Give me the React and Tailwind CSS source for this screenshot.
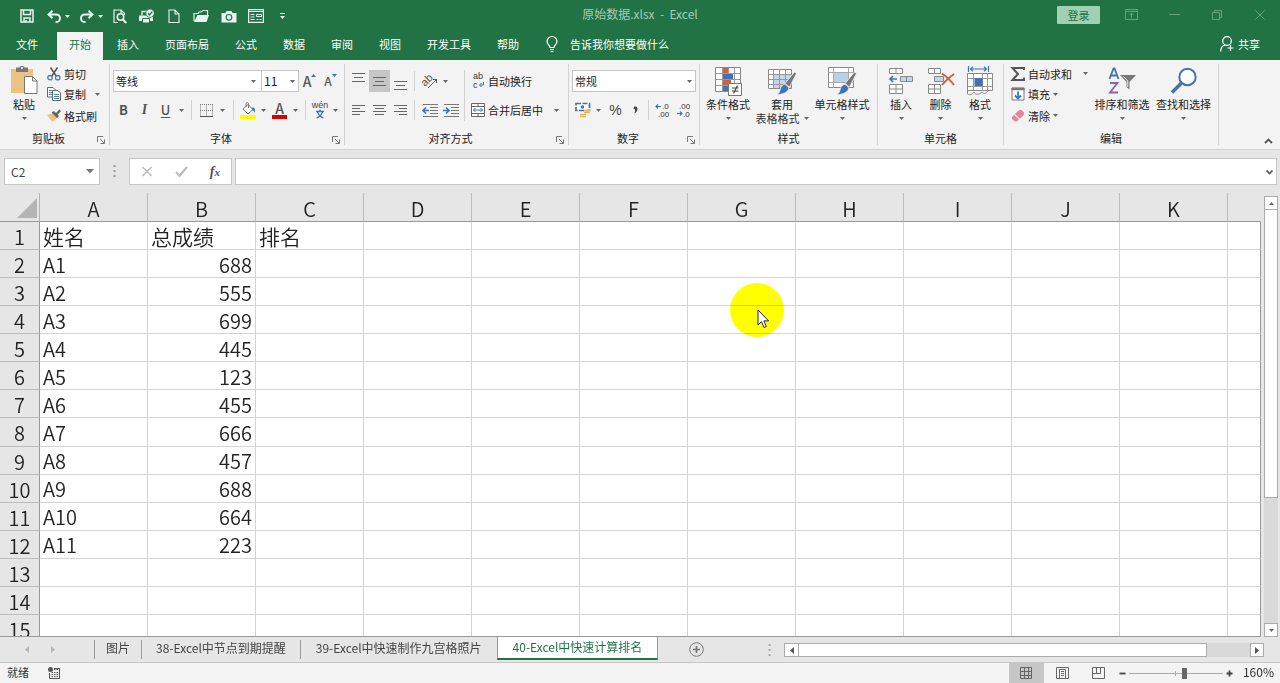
import React from "react";

const tabs = ["插入", "页面布局", "公式", "数据", "审阅", "视图", "开发工具", "帮助"];
const columns = ["A", "B", "C", "D", "E", "F", "G", "H", "I", "J", "K"];
const records = [
  ["姓名", "总成绩", "排名"],
  ["A1", "688"],
  ["A2", "555"],
  ["A3", "699"],
  ["A4", "445"],
  ["A5", "123"],
  ["A6", "455"],
  ["A7", "666"],
  ["A8", "457"],
  ["A9", "688"],
  ["A10", "664"],
  ["A11", "223"],
  [],
  [],
  [],
];

function Icon({ w = 16, h = 16, children, className = "" }) {
  return (
    <svg
      width={w}
      height={h}
      viewBox={`0 0 ${w} ${h}`}
      fill="none"
      stroke="currentColor"
      aria-hidden="true"
      className={`shrink-0 overflow-visible font-['Liberation_Sans','Noto_Sans_CJK_SC',sans-serif] ${className}`}
    >
      {children}
    </svg>
  );
}

function Arrow({ className = "" }) {
  return (
    <Icon w={5} h={3} className={className}>
      <path d="M0 0h5L2.5 3z" fill="currentColor" stroke="none" />
    </Icon>
  );
}

function DropButton({ label, className = "w-[11px]" }) {
  return (
    <button aria-label={label} className={`flex h-5 shrink-0 items-center justify-center text-[#666] ${className}`}>
      <Arrow />
    </button>
  );
}

function Tool({ label, className = "w-[21px]", children }) {
  return (
    <button aria-label={label} className={`flex h-[22px] shrink-0 items-center justify-center ${className}`}>
      {children}
    </button>
  );
}

function Divider({ className = "h-5" }) {
  return <span className={`w-px shrink-0 bg-[#d2d2d2] ${className}`} />;
}

function Group({ title, launcher, className, children }) {
  return (
    <section
      aria-label={title}
      className={`my-[4px] flex shrink-0 flex-col border-r border-[#d2d2d2] ${className}`}
    >
      <div className="flex flex-1">{children}</div>
      <div className="flex h-[14px] items-center">
        <span className="flex-1 text-center">{title}</span>
        {launcher ? (
          <button aria-label={`${title}设置`} className="mt-1 mr-[4px] text-[#777]">
            <Icon w={8} h={8}>
              <path d="M.5 6V.5H6M3 3l4 4M7.5 3.5v4h-4" />
            </Icon>
          </button>
        ) : null}
      </div>
    </section>
  );
}

function BigButton({ icon, lines, className }) {
  return (
    <button className={`flex shrink-0 flex-col items-center self-start leading-[14px] ${className}`}>
      <span className="flex h-[33px] items-center">{icon}</span>
      <span className="whitespace-nowrap">{lines[0]}</span>
      <span className="flex h-[14px] items-center gap-[4px] whitespace-nowrap text-[#666]">
        {lines[1] ? <span className="text-[#333]">{lines[1]}</span> : null}
        <Arrow />
      </span>
    </button>
  );
}

function AlignIcon({ rows }) {
  return (
    <Icon w={13} h={rows.length * 3} className="text-[#666]">
      {rows.map(([a, b], i) => (
        <path key={i} d={`M${a} ${i * 3 + 1.5}H${b}`} />
      ))}
    </Icon>
  );
}

function ThreeLines() {
  return (
    <Icon w={13} h={9} className="text-[#666]">
      <path d="M0 .5h13M2 4.500h9M0 8.500h13" />
    </Icon>
  );
}

const SaveIcon = () => (
  <Icon w={14} h={14}>
    <path d="M1 1h12v12H1zM3.5 1v4.500h7V1M4 13V9h6v4M6 13v-2" strokeWidth="1.500" />
  </Icon>
);
const UndoIcon = ({ flip }) => (
  <Icon w={14} h={13} className={flip ? "-scale-x-100" : ""}>
    <path d="M1.500 4.500h7.500c2.500 0 4 1.500 4 3.700 0 2.300-1.700 3.800-4.500 3.800M5.500.8L1.500 4.500l4 3.700" strokeWidth="1.900" />
  </Icon>
);
const PreviewIcon = () => (
  <Icon w={14} h={15}>
    <path d="M5 13.500H1V1h7l3.500 3.500v1.500M8 1v3" strokeWidth="1.200" />
    <circle cx="7.500" cy="8" r="3.200" strokeWidth="1.600" />
    <path d="M9.700 10.300l3.500 3.700" strokeWidth="2.200" />
  </Icon>
);
const PrintIcon = () => (
  <Icon w={16} h={15}>
    <path d="M0 6.500h14V12H0z" fill="currentColor" stroke="none" />
    <path d="M3 6.500V2.500h5" strokeWidth="1.300" />
    <path d="M3.500 9.500h7v4.500h-7z" fill="currentColor" stroke="#217346" />
    <circle cx="11" cy="4.200" r="4.200" fill="#e9f3ed" stroke="#217346" strokeWidth=".8" />
    <path d="M9 4.200l1.500 1.700 2.700-3.300" stroke="#217346" strokeWidth="1.300" />
  </Icon>
);
const PageIcon = () => (
  <Icon w={12} h={14}>
    <path d="M1 1h6l4 4v8.500H1zM7 1v4h4" strokeWidth="1.100" />
  </Icon>
);
const FolderIcon = () => (
  <Icon w={16} h={14}>
    <path d="M1 12V4.500h4l1-1.500h2l2-1.500h4.500V6" strokeWidth="1.200" />
    <path d="M1 13l3.500-7H16l-2.500 7z" fill="currentColor" stroke="none" />
  </Icon>
);
const CameraIcon = () => (
  <Icon w={16} h={13}>
    <path d="M.5 3h4l1-2h5l1 2h4v9.500H.5z" fill="currentColor" stroke="none" />
    <circle cx="8" cy="7.300" r="2.800" stroke="#217346" strokeWidth="1.200" />
  </Icon>
);
const FormIcon = () => (
  <Icon w={16} h={14}>
    <path d="M.6.6h14.800v12.800H.6zM.6 2.500h14.800" strokeWidth="1.200" />
    <path d="M2.500 5.500h4M2.500 8h4M2.500 10.500h4M8.500 5.500h5v2h-5zM8.500 10.500h2M11.500 10.500h2" />
  </Icon>
);

const PasteIcon = () => (
  <Icon w={28} h={31}>
    <path d="M1 4h22v24H1z" fill="#eac282" stroke="none" />
    <path d="M6 2.500h3.500C9.500.5 14.500.5 14.500 2.500H18V7H6z" fill="#777" stroke="none" />
    <circle cx="12" cy="3" r="1" fill="#fff" stroke="none" />
    <path d="M14.500 11.500h8l4.500 4.500v12.500H14.500z" fill="#fff" stroke="#777" />
    <path d="M22.500 11.500V16H27" stroke="#777" />
  </Icon>
);
const CutIcon = () => (
  <Icon w={14} h={14}>
    <path d="M3.500.5l6 9M10.500.5l-6 9" stroke="#555" strokeWidth="1.500" />
    <circle cx="3" cy="10.700" r="2.200" stroke="#4a7ebb" strokeWidth="1.300" />
    <circle cx="10.700" cy="10.700" r="2.200" stroke="#4a7ebb" strokeWidth="1.300" />
  </Icon>
);
const CopyIcon = () => (
  <Icon w={14} h={14}>
    <path d="M.5.500h5.500l2 2v7.500H.5z" fill="#fff" stroke="#666" />
    <path d="M2 3.500h3M2 5.500h3M2 7.500h3" stroke="#4a7ebb" />
    <path d="M5.500 3.500h5.500l2.500 2.500v7.500h-8z" fill="#fff" stroke="#666" />
    <path d="M7 7.500h5M7 9.500h5M7 11.500h5" stroke="#4a7ebb" />
  </Icon>
);
const BrushIcon = () => (
  <Icon w={14} h={14}>
    <path d="M0 6l5.500-1.500 4.500 4.500L5.500 13z" fill="#eac282" stroke="none" />
    <path d="M4.500 3.500l2.500-1.500 2 2L12.300.5 14 2.200 10.700 5.500l1.300 1.500-2 2.200z" fill="#666" stroke="none" />
  </Icon>
);

const CondIcon = () => (
  <Icon w={28} h={30}>
    <path d="M1.500 1.500h25v24h-25z" fill="#fff" stroke="#888" />
    <path d="M1.500 7.500h25M1.500 13.500h25M1.500 19.500h25M8.500 1.500v24M14.500 1.500v24M20.500 1.500v24" stroke="#999" />
    <path d="M9 2h5v5H9zM9 14h8v5H9z" fill="#d1603d" stroke="none" />
    <path d="M9 8h10v5H9zM9 20h5v5H9z" fill="#3f73b3" stroke="none" />
    <path d="M14.500 17.500h13v12h-13z" fill="#fff" stroke="#777" />
    <path d="M18 22h6.500M18 25h6.500M23.500 19.500l-4 8" stroke="#444" strokeWidth="1.200" />
  </Icon>
);
const brush = (
  <>
    <path d="M27.500 6l2 1.500-7 13.500-4.500-3.500z" fill="#777" stroke="#f3f3f3" strokeWidth=".8" />
    <path d="M17.500 18.500c2.500.5 4 2 4 4.500-1.500 4-7 5.500-11.500 5.500 2.500-1.500 2.500-3 3.500-5.500.5-2.500 2-4 4-4.500z" fill="#3f73b3" stroke="#f3f3f3" strokeWidth=".6" />
  </>
);
const TableFormatIcon = () => (
  <Icon w={30} h={30}>
    <path d="M1.500 3.500h23v19h-23z" fill="#fff" stroke="#888" />
    <path d="M7 8h17v14H7z" fill="#c3d6ea" stroke="none" />
    <path d="M1.500 8.500h23M1.500 13.500h23M1.500 18.500h23M6.500 3.500v19M12.500 3.500v19M18.500 3.500v19" stroke="#999" />
    {brush}
  </Icon>
);
const CellStyleIcon = () => (
  <Icon w={30} h={30}>
    <path d="M1.500 1.500h25v20h-25z" fill="#fff" stroke="#888" />
    <path d="M1.500 6.500h25M1.500 16.500h25M6.500 1.500v20M21.500 1.500v20" stroke="#aaa" />
    <path d="M7 7h14v9H7z" fill="#b8d0e8" stroke="none" />
    {brush}
  </Icon>
);
const InsertIcon = () => (
  <Icon w={26} h={28}>
    <path d="M1.500 1.500h13v5h-13zM8 1.500v5M1.500 17.500h13v9h-13zM8 17.500v9M1.500 22h13" fill="#fff" stroke="#888" />
    <path d="M12.500 9.500h12v5h-12zM18.500 9.500v5" fill="#c3d6ea" stroke="#888" />
    <path d="M9 12H2M5 9l-3 3 3 3" stroke="#3f73b3" strokeWidth="1.700" />
  </Icon>
);
const DeleteIcon = () => (
  <Icon w={28} h={28}>
    <path d="M1.500 1.500h12v5h-12zM7.500 1.500v5M1.500 17.500h12v9h-12zM7.500 17.500v9M1.500 22h12" fill="#fff" stroke="#888" />
    <path d="M7.500 9.500h9v5h-9z" fill="#c3d6ea" stroke="#888" />
    <path d="M15 6.500c4 2.500 8 6.500 12 11.500M27 7c-4 2.500-8 6-12 11" stroke="#d1603d" strokeWidth="2" />
  </Icon>
);
const FormatIcon = () => (
  <Icon w={28} h={30}>
    <path d="M2.500 0v6M22.500 0v6M4.500 3h16M7 .8L4.500 3 7 5.200M18 .8L20.500 3 18 5.200" stroke="#3f73b3" strokeWidth="1.200" />
    <path d="M1.500 7.500h25v17h-25z" fill="#fff" stroke="#888" />
    <path d="M1.500 12.500h25M1.500 20.500h25M7.500 7.500v17M16.500 7.500v17M21.500 7.500v17" stroke="#999" />
    <path d="M8.500 12h8v8h-8z" fill="#3f73b3" stroke="none" />
    <path d="M1.500 24.500v3.500c3 1.500 4.500.5 6.500-2 1 3 5 3 8 0 1.500 2 4 2 6-1" stroke="#888" />
  </Icon>
);
const SortIcon = () => (
  <Icon w={28} h={28}>
    <path d="M1.500 12L5.500 1.500h1L10.500 12M3 8.500h6" stroke="#3f73b3" strokeWidth="1.800" />
    <path d="M2 16h7.500L2 25.500h8" stroke="#8f5fb5" strokeWidth="1.800" />
    <path d="M12 8h16l-6.500 7v7.500L18.500 20v-5z" fill="#777" stroke="none" />
    <path d="M15.500 9.500l4.300 4.500v6" stroke="#eee" />
  </Icon>
);
const FindIcon = () => (
  <Icon w={28} h={28}>
    <circle cx="17.500" cy="10" r="8.200" fill="#fff" stroke="#3f73b3" strokeWidth="2" />
    <path d="M11.500 16L2 25.500" stroke="#3f73b3" strokeWidth="3.500" />
  </Icon>
);

function Ribbon() {
  return (
    <div className="flex h-[90px] shrink-0 border-b border-[#d2d2d2] bg-[#f3f3f3] text-[11px] leading-[14px] text-[#222]">
      <Group title="剪贴板" launcher className="w-[110px]">
        <BigButton icon={<PasteIcon />} lines={["粘贴"]} className="ml-[5px] w-[38px]" />
        <div className="ml-[4px] flex flex-col">
          <button className="flex h-[19px] items-center gap-[3px]"><CutIcon />剪切</button>
          <div className="flex h-[22px] items-center">
            <button className="flex items-center gap-[3px]"><CopyIcon />复制</button>
            <DropButton label="复制选项" className="ml-[6px] w-[11px]" />
          </div>
          <button className="flex h-[21px] items-center gap-[3px]"><BrushIcon />格式刷</button>
        </div>
      </Group>

      <Group title="字体" launcher className="w-[235px]">
        <div className="flex flex-col gap-[7px] pt-[6px] pl-[3px]">
          <div className="flex h-[22px] items-center">
            <div className="relative flex h-[22px] w-[149px] items-center">
              <select aria-label="字体名称" className="h-full w-full appearance-none border border-[#c6c6c6] bg-white px-[2px]">
                <option>等线</option>
              </select>
              <Arrow className="pointer-events-none absolute right-[6px] text-[#666]" />
            </div>
            <div className="relative -ml-px flex h-[22px] w-[38px] items-center">
              <select aria-label="字号" className="h-full w-full appearance-none border border-[#c6c6c6] bg-white px-[2px] text-[12px]">
                <option>11</option>
              </select>
              <Arrow className="pointer-events-none absolute right-[4px] text-[#666]" />
            </div>
            <Tool label="增大字号">
              <span className="text-[14px] font-medium text-[#555]">A</span>
              <Arrow className="-mt-3 rotate-180 text-[#3f73b3]" />
            </Tool>
            <Tool label="减小字号">
              <span className="text-[12px] font-medium text-[#555]">A</span>
              <Arrow className="-mt-3 text-[#3f73b3]" />
            </Tool>
          </div>
          <div className="flex h-[22px] items-center text-[#555]">
            <Tool label="加粗"><b className="text-[13px]">B</b></Tool>
            <Tool label="倾斜"><i className="font-['Liberation_Serif',serif] text-[14px] font-bold">I</i></Tool>
            <Tool label="下划线"><span className="text-[13px] font-medium underline underline-offset-2">U</span></Tool>
            <DropButton label="下划线选项" />
            <Divider className="mx-[4px] h-5" />
            <Tool label="边框">
              <Icon w={13} h={13}>
                <path d="M.5.500v12M12.500.500v12M6.500.500v12M0 .5h13M0 6.500h13" strokeDasharray="1 1" stroke="#777" />
                <path d="M0 12.500h13" stroke="#555" />
              </Icon>
            </Tool>
            <DropButton label="边框选项" />
            <Divider className="mr-[3px] ml-[5px] h-5" />
            <Tool label="填充颜色">
              <Icon w={16} h={17}>
                <path d="M3 7l5-4.500 5 5L8 12z" fill="#fff" stroke="#777" />
                <path d="M6 5V1.500c1-1.500 2.500-1 2.500.5v4" stroke="#777" />
                <path d="M12 5.500c3 0 3.500 2 2.800 5-1-1-1.500-2.500-2.800-3z" fill="#3f73b3" stroke="none" />
                <path d="M0 13h16v4H0z" fill="#ffff00" stroke="none" />
              </Icon>
            </Tool>
            <DropButton label="填充颜色选项" />
            <Tool label="字体颜色">
              <span className="flex w-[15px] flex-col items-center border-b-4 border-[#d90000] text-[14px] leading-[13px] font-medium">A</span>
            </Tool>
            <DropButton label="字体颜色选项" />
            <Divider className="mr-[3px] ml-[4px] h-5" />
            <Tool label="拼音">
              <Icon w={16} h={17}>
                <text x="8" y="6" textAnchor="middle" fontSize="9" fill="#444" stroke="none">wén</text>
                <path d="M4 9.500h8M8 7.500v2M5.500 10c1 3 3 5 6 6M10.500 10c-1 3-3 5-6 6" stroke="#3f73b3" strokeWidth="1.300" />
              </Icon>
            </Tool>
            <DropButton label="拼音选项" />
          </div>
        </div>
      </Group>

      <Group title="对齐方式" launcher className="w-[224px]">
        <div className="flex w-full items-start pt-[6px] pl-[3px]">
          <div className="flex flex-col gap-[7px]">
            <div className="flex h-[22px] items-center">
              <Tool label="顶端对齐" className="w-[21px] pb-[8px]"><ThreeLines /></Tool>
              <Tool label="垂直居中" className="w-[21px] bg-[#c6c6c6]"><ThreeLines /></Tool>
              <Tool label="底端对齐" className="w-[21px] pt-[8px]"><ThreeLines /></Tool>
              <Divider className="mr-[4px] ml-[3px] h-5" />
              <Tool label="方向">
                <Icon w={16} h={15} className="text-[#555]">
                  <text x="0" y="10" transform="rotate(-45 5 8)" fontSize="11" fill="#555" stroke="none">ab</text>
                  <path d="M6 14l8.500-8.500M11 5.500h3.500V9" />
                </Icon>
              </Tool>
              <DropButton label="方向选项" />
            </div>
            <div className="flex h-[22px] items-center">
              <Tool label="左对齐"><AlignIcon rows={[[0, 13], [0, 8], [0, 13], [0, 8]]} /></Tool>
              <Tool label="居中"><AlignIcon rows={[[0, 13], [2, 11], [0, 13], [2, 11]]} /></Tool>
              <Tool label="右对齐"><AlignIcon rows={[[0, 13], [5, 13], [0, 13], [5, 13]]} /></Tool>
              <Divider className="mr-[4px] ml-[3px] h-5" />
              <Tool label="减少缩进量">
                <Icon w={16} h={13} className="text-[#777]">
                  <path d="M1 .5h15M8 3.500h8M8 6.500h8M8 9.500h8M1 12.500h15" />
                  <path d="M7 6.500H1.500M4 3.500l-3 3 3 3" stroke="#3f73b3" strokeWidth="1.700" />
                </Icon>
              </Tool>
              <Tool label="增加缩进量">
                <Icon w={16} h={13} className="text-[#777]">
                  <path d="M1 .5h15M8 3.500h8M8 6.500h8M8 9.500h8M1 12.500h15" />
                  <path d="M0 6.500h5.500M3 3.500l3 3-3 3" stroke="#3f73b3" strokeWidth="1.700" />
                </Icon>
              </Tool>
            </div>
          </div>
          <Divider className="ml-[3px] h-[51px]" />
          <div className="flex flex-1 flex-col gap-[7px] pl-[6px]">
            <button className="flex h-[22px] items-center gap-[3px]">
              <Icon w={14} h={16} className="text-[#555]">
                <text x="2" y="6" fontSize="9" fill="#333" stroke="none">ab</text>
                <text x="2" y="15" fontSize="9" fill="#333" stroke="none">c</text>
                <path d="M12.500 9v3H8.500M10.500 10l-2 2 2 2" stroke="#3f73b3" />
              </Icon>
              自动换行
            </button>
            <div className="flex h-[22px] items-center">
              <button className="flex items-center gap-[3px]">
                <Icon w={14} h={14} className="text-[#666]">
                  <path d="M.5.500h13v13H.5zM.5 3.500h13M.5 10.500h13M7 .5v3M7 10.500v3" fill="#fff" />
                  <path d="M2.500 7h9M4.500 5l-2 2 2 2M9.500 5l2 2-2 2" stroke="#3f73b3" />
                </Icon>
                合并后居中
              </button>
              <DropButton label="合并选项" className="ml-[8px] w-[11px]" />
            </div>
          </div>
        </div>
      </Group>

      <Group title="数字" launcher className="w-[131px]">
        <div className="flex w-full flex-col gap-[7px] pt-[6px] pr-[3px] pl-[3px]">
          <div className="relative flex h-[22px] items-center">
            <select aria-label="数字格式" className="h-full w-full appearance-none border border-[#c6c6c6] bg-white px-[2px]">
              <option>常规</option>
            </select>
            <Arrow className="pointer-events-none absolute right-[4px] text-[#666]" />
          </div>
          <div className="flex h-[22px] items-center text-[#555]">
            <Tool label="会计数字格式">
              <Icon w={16} h={16}>
                <path d="M1 1.500h13.500v7H1z" fill="#fff" stroke="#3f73b3" strokeWidth="1.700" strokeDasharray="5 1.500" />
                <circle cx="7.500" cy="5" r="1.700" fill="#3f73b3" stroke="none" />
                <path d="M9 8.500h6M9 10.500h6M5 12.500h6M5 14.500h6" stroke="#eab65f" strokeWidth="1.400" />
              </Icon>
            </Tool>
            <DropButton label="货币选项" />
            <Tool label="百分比" className="w-[23px]"><span className="font-['Liberation_Sans',sans-serif] text-[14px] text-[#444]">%</span></Tool>
            <Tool label="千位分隔" className="w-[17px]">
              <Icon w={5} h={8}>
                <path d="M1.200.500h2.300L4.500 2.500C4.500 5 3.500 6.500 1 7.500 2 6 2.300 5 2 3.500L.5 2.500z" fill="#444" stroke="none" />
              </Icon>
            </Tool>
            <Divider className="mr-[3px] ml-[4px] h-5" />
            <Tool label="增加小数位数">
              <Icon w={15} h={14}>
                <path d="M6 3.500H1M3 1.500l-2 2 2 2" stroke="#3f73b3" strokeWidth="1.200" />
                <text x="7" y="6" fontSize="8" fill="#333" stroke="none">.0</text>
                <text x="3" y="14" fontSize="8" fill="#333" stroke="none">.00</text>
              </Icon>
            </Tool>
            <Tool label="减少小数位数">
              <Icon w={15} h={14}>
                <text x="3" y="6" fontSize="8" fill="#333" stroke="none">.00</text>
                <path d="M1 10.500h5M4 8.500l2 2-2 2" stroke="#3f73b3" strokeWidth="1.200" />
                <text x="7" y="14" fontSize="8" fill="#333" stroke="none">.0</text>
              </Icon>
            </Tool>
          </div>
        </div>
      </Group>

      <Group title="样式" className="w-[178px]">
        <div className="flex pl-[2px]">
          <BigButton icon={<CondIcon />} lines={["条件格式"]} className="w-[52px]" />
          <BigButton icon={<TableFormatIcon />} lines={["套用", "表格格式"]} className="w-[56px]" />
          <BigButton icon={<CellStyleIcon />} lines={["单元格样式"]} className="w-[64px]" />
        </div>
      </Group>

      <Group title="单元格" className="w-[126px]">
        <div className="flex pl-[3px]">
          <BigButton icon={<InsertIcon />} lines={["插入"]} className="w-[40px]" />
          <BigButton icon={<DeleteIcon />} lines={["删除"]} className="w-[39px]" />
          <BigButton icon={<FormatIcon />} lines={["格式"]} className="w-[40px]" />
        </div>
      </Group>

      <Group title="编辑" className="w-[215px]">
        <div className="ml-[7px] flex w-[80px] flex-col">
          <div className="flex h-[19px] items-center">
            <button className="flex items-center gap-[3px]">
              <Icon w={14} h={14} className="text-[#555]">
                <path d="M13 3V1H1.500l5.500 6-5.500 6H13v-2.500" strokeWidth="2" />
              </Icon>
              自动求和
            </button>
            <DropButton label="求和选项" className="ml-[8px] w-[11px]" />
          </div>
          <button className="flex h-[22px] items-center gap-[3px]">
            <Icon w={14} h={14}>
              <path d="M1 1h12v12H1z" fill="#fff" stroke="#777" />
              <path d="M.5 2h13" stroke="#777" strokeWidth="2.500" />
              <path d="M7 4.500v7M4 8.500l3 3 3-3" stroke="#3f73b3" strokeWidth="1.800" />
            </Icon>
            填充<Arrow className="text-[#666]" />
          </button>
          <button className="flex h-[21px] items-center gap-[3px]">
            <Icon w={14} h={14}>
              <path d="M1 8l2.200-2.200 4.800 4.700L6 12.500H4L1 10z" fill="#e8839b" stroke="none" />
              <path d="M4 5l4.500-4h2L13 3.500v2L9 9.700z" fill="#e8839b" stroke="none" />
            </Icon>
            清除<Arrow className="text-[#666]" />
          </button>
        </div>
        <BigButton icon={<SortIcon />} lines={["排序和筛选"]} className="w-[62px]" />
        <BigButton icon={<FindIcon />} lines={["查找和选择"]} className="w-[61px]" />
      </Group>

      <div className="flex flex-1 items-end justify-end">
        <button aria-label="折叠功能区" className="mr-[7px] mb-[5px] text-[#555]">
          <Icon w={9} h={6}>
            <path d="M1 5l3.500-3.500L8 5" strokeWidth="1.800" />
          </Icon>
        </button>
      </div>
    </div>
  );
}

function TitleBar() {
  return (
    <header className="shrink-0 bg-[#217346] text-[#e9f3ed]">
      <div className="grid h-[32px] grid-cols-[1fr_auto_1fr] items-center">
        <div className="flex items-center">
          <button aria-label="保存" className="ml-[14px] flex w-[26px] justify-center"><SaveIcon /></button>
          <button aria-label="撤消" className="ml-[7px] flex items-center gap-[4px]"><UndoIcon /><Arrow /></button>
          <button aria-label="恢复" className="ml-[10px] flex items-center gap-[4px]"><UndoIcon flip /><Arrow /></button>
          <div className="ml-[3px] flex">
            <button aria-label="打印预览" className="flex w-[27px] justify-center"><PreviewIcon /></button>
            <button aria-label="快速打印" className="flex w-[27px] justify-center"><PrintIcon /></button>
            <button aria-label="新建" className="flex w-[27px] justify-center"><PageIcon /></button>
            <button aria-label="打开" className="flex w-[28px] justify-center"><FolderIcon /></button>
            <button aria-label="照相机" className="flex w-[27px] items-center justify-center"><CameraIcon /></button>
            <button aria-label="记录单" className="flex w-[27px] justify-center"><FormIcon /></button>
            <button aria-label="自定义快速访问工具栏" className="flex w-[27px] items-center justify-center">
              <Icon w={5} h={7}>
                <path d="M0 .5h5" />
                <path d="M0 3h5L2.500 6z" fill="currentColor" stroke="none" />
              </Icon>
            </button>
          </div>
        </div>
        <h1 className="pb-[4px] text-[12px] whitespace-pre text-[#a5cbb4]">原始数据.xlsx  -  Excel</h1>
        <div className="flex items-center justify-end pb-[3px] text-[#65a27f]">
          <button className="mr-[25px] h-[18px] w-[43px] rounded-[1px] bg-[#9fd0b3] text-[11px] leading-[16px] text-[#217346]">登录</button>
          <button aria-label="功能区显示选项" className="flex w-[13px]">
            <Icon w={13} h={11}>
              <path d="M.5.500h12v10H.5zM.5 2.500h12M6.500 9V4.500M4.500 6l2-2 2 2" />
            </Icon>
          </button>
          <button aria-label="最小化" className="ml-[31px] flex w-[11px]">
            <Icon w={11} h={11}><path d="M0 5.500h11" /></Icon>
          </button>
          <button aria-label="还原" className="ml-[32px] flex w-[10px]">
            <Icon w={10} h={10}><path d="M.5 2.500h7v7h-7zM2.500 2.500v-2h7v7h-2" /></Icon>
          </button>
          <button aria-label="关闭" className="mr-[15px] ml-[33px] flex w-[10px]">
            <Icon w={10} h={10}><path d="M.5.500l9 9M9.500.500l-9 9" /></Icon>
          </button>
        </div>
      </div>
      <nav aria-label="功能区选项卡" className="flex h-[28px] items-center text-[11px] leading-[22px] text-white">
        <button className="ml-[4px] px-[12px] pb-[4px]">文件</button>
        <button aria-current="page" className="ml-[7px] h-full bg-[#f3f3f3] px-[12px] pb-[4px] text-[#217346]">开始</button>
        <div className="ml-[2px] flex gap-[2px] pb-[4px]">
          {tabs.map((t) => (
            <button key={t} className="px-[12px]">{t}</button>
          ))}
        </div>
        <button className="ml-[15px] flex items-center gap-[12px] pb-[4px]">
          <Icon w={12} h={16}>
            <path d="M4 11.500C4 9 1 8.500 1 5.500a5 5 0 0110 0c0 3-3 3.500-3 6zM4 13.500h4M4.500 15.500h3" strokeWidth="1.200" />
          </Icon>
          告诉我你想要做什么
        </button>
        <button className="mr-[20px] ml-auto flex items-center gap-[4px] pb-[4px]">
          <Icon w={14} h={16}>
            <circle cx="7" cy="5" r="4.300" strokeWidth="1.200" />
            <path d="M.7 15.500c0-3.500 2-6 4.500-6.500M10.500 9v6M7.500 12h6" strokeWidth="1.200" />
          </Icon>
          共享
        </button>
      </nav>
    </header>
  );
}

function FormulaBar() {
  return (
    <div className="flex h-[43px] shrink-0 items-center bg-[#e6e6e6] pr-[3px] pl-[4px]">
      <div className="flex h-[27px] w-[96px] items-center border border-[#c8c8c8] bg-white">
        <input aria-label="名称框" defaultValue="C2" className="h-full w-0 flex-1 px-[6px] text-[12px] text-[#444] outline-none" />
        <button aria-label="名称列表" className="px-[5px] text-[#777]">
          <Icon w={8} h={5}><path d="M0 0h8L4 4.500z" fill="currentColor" stroke="none" /></Icon>
        </button>
      </div>
      <Icon w={3} h={13} className="mx-[13px] text-[#999]">
        <path d="M1.500 0v13" strokeWidth="2" strokeDasharray="2 3" />
      </Icon>
      <div className="flex h-[27px] w-[103px] items-center justify-between border border-[#c8c8c8] bg-white px-[11px] text-[#bbb]">
        <button aria-label="取消"><Icon w={12} h={11}><path d="M1.500 1l9 9M10.500 1l-9 9" strokeWidth="1.500" /></Icon></button>
        <button aria-label="输入"><Icon w={13} h={11}><path d="M1 6l3.500 4L12 1" strokeWidth="2" /></Icon></button>
        <button aria-label="插入函数" className="font-['Liberation_Serif',serif] text-[14px] leading-none font-bold text-[#555] italic">
          f<span className="text-[11px]">x</span>
        </button>
      </div>
      <div className="ml-[3px] flex h-[27px] flex-1 items-center border border-[#c8c8c8] bg-white">
        <input aria-label="编辑栏" className="h-full flex-1 px-2 text-[12px] outline-none" />
        <button aria-label="展开编辑栏" className="pr-[2px] text-[#555]">
          <Icon w={9} h={6}><path d="M1.500 1.500l3 3 3-3" strokeWidth="1.700" /></Icon>
        </button>
      </div>
    </div>
  );
}

function Sheet() {
  return (
    <main className="relative flex min-h-0 flex-1 bg-[#e6e6e6]">
      <div className="min-w-0 flex-1 overflow-hidden border-b border-[#999]">
        <table className="h-[450px] w-full table-fixed border-separate border-spacing-0 text-[20px] leading-[24px] font-[350] text-[#222]">
          <colgroup>
            <col className="w-[40px]" />
            {columns.map((c) => (
              <col key={c} className="w-[108px]" />
            ))}
            <col />
          </colgroup>
          <thead>
            <tr className="h-[29px]">
              <th aria-label="全选" className="border-r border-b border-r-[#b5b5b5] border-b-[#999] bg-[#e6e6e6] p-0 align-bottom">
                <Icon w={20} h={20} className="mr-[2px] mb-[3px] ml-auto">
                  <path d="M20 0v20H0z" fill="#b5b5b5" stroke="none" />
                </Icon>
              </th>
              {columns.map((c) => (
                <th key={c} scope="col" className="border-r border-b border-r-[#bdbdbd] border-b-[#999] bg-[#e6e6e6] p-0 pt-[3px] font-[350]">
                  {c}
                </th>
              ))}
              <th className="border-r border-b border-r-[#e6e6e6] border-b-[#999] bg-[#e6e6e6] p-0" />
            </tr>
          </thead>
          <tbody>
            {records.map((row, r) => (
              <tr key={r}>
                <th scope="row" className="border-r border-b border-r-[#999] border-b-[#bdbdbd] bg-[#e6e6e6] p-0 pt-[3px] font-[350]">
                  {r + 1}
                </th>
                {columns.map((c, i) => (
                  <td
                    key={c}
                    className={`overflow-hidden border-r border-b border-[#d4d4d4] bg-white px-[3px] whitespace-nowrap ${
                      i === 1 && r > 0 ? "text-right" : "text-left"
                    } ${r === 0 ? "py-0 text-[21px]" : "pt-[2px] pb-0"}`}
                  >
                    {row[i]}
                  </td>
                ))}
                <td className="border-r border-b border-r-[#999] border-b-[#d4d4d4] bg-white p-0" />
              </tr>
            ))}
          </tbody>
        </table>
      </div>
      <div aria-label="垂直滚动条" className="ml-[3px] flex w-[16px] flex-col pt-[3px] pr-[2px]">
        <button aria-label="向上滚动" className="flex h-[14px] items-center justify-center border border-[#ababab] bg-white text-[#666]">
          <Arrow className="rotate-180" />
        </button>
        <div className="flex flex-1 flex-col bg-[#d9d9d9]">
          <div className="-mt-px basis-[70%] border border-[#ababab] bg-white" />
        </div>
        <button aria-label="向下滚动" className="flex h-[14px] items-center justify-center border border-[#ababab] bg-white text-[#666]">
          <Arrow />
        </button>
      </div>
      <div className="pointer-events-none absolute top-[90px] left-[730px] h-[54px] w-[54px] rounded-full bg-[#ffff00] mix-blend-multiply" />
      <Icon w={13} h={20} className="pointer-events-none absolute top-[116px] left-[757px]">
        <path d="M1 1v15l3.500-3.300L7 18.500l2.300-1-2.400-5.600h4.800z" fill="#fff" stroke="#222" />
      </Icon>
    </main>
  );
}

function SheetTabs() {
  return (
    <div className="flex h-[26px] shrink-0 items-start border-b border-[#c6c6c6] bg-[#e6e6e6] text-[12px] text-[#444]">
      <div className="flex h-[24px] w-[94px] shrink-0 items-center gap-[22px] pl-[25px] text-[#b5b5b5]">
        <button aria-label="上一张工作表"><Icon w={4} h={7}><path d="M4 0v7L0 3.500z" fill="currentColor" stroke="none" /></Icon></button>
        <button aria-label="下一张工作表"><Icon w={4} h={7}><path d="M0 0v7l4-3.500z" fill="currentColor" stroke="none" /></Icon></button>
      </div>
      <button className="mt-[3px] h-[19px] shrink-0 border-l border-[#999] px-[11px] pb-[4px] leading-[15px]">图片</button>
      <button className="mt-[3px] h-[19px] shrink-0 border-l border-[#999] px-[14px] pb-[4px] leading-[15px] whitespace-nowrap">
        38-Excel中节点到期提醒
      </button>
      <button className="mt-[3px] h-[19px] shrink-0 border-l border-[#999] px-[15px] pb-[4px] leading-[15px] whitespace-nowrap">
        39-Excel中快速制作九宫格照片
      </button>
      <button className="-mt-px h-[24px] shrink-0 border-x border-b-2 border-x-[#999] border-b-[#217346] bg-white px-[15px] leading-[22px] whitespace-nowrap text-[#217346]">
        40-Excel中快速计算排名
      </button>
      <button aria-label="新工作表" className="mt-[5px] ml-[31px] text-[#777]">
        <Icon w={15} h={15}>
          <circle cx="7.500" cy="7.500" r="6.800" />
          <path d="M7.500 4v7M4 7.500h7" strokeWidth="1.700" />
        </Icon>
      </button>
      <Icon w={3} h={12} className="mt-[7px] ml-auto text-[#aaa]">
        <path d="M1.500 0v12" strokeWidth="2" strokeDasharray="2 3" />
      </Icon>
      <div aria-label="水平滚动条" className="mt-[6px] mr-[16px] ml-[13px] flex h-[14px] w-[480px] shrink-0 bg-[#d9d9d9]">
        <button aria-label="向左滚动" className="flex w-[15px] items-center justify-center border border-[#ababab] bg-white text-[#555]">
          <Icon w={4} h={7}><path d="M4 0v7L0 3.500z" fill="currentColor" stroke="none" /></Icon>
        </button>
        <div className="-ml-px w-[409px] border border-[#ababab] bg-white" />
        <button aria-label="向右滚动" className="ml-auto flex w-[14px] items-center justify-center border border-[#ababab] bg-white text-[#555]">
          <Icon w={4} h={7}><path d="M0 0v7l4-3.500z" fill="currentColor" stroke="none" /></Icon>
        </button>
      </div>
    </div>
  );
}

function StatusBar() {
  return (
    <footer className="flex h-[20px] shrink-0 items-center bg-[#f3f3f3] text-[11px] text-[#333]">
      <span className="ml-[7px] pb-[2px] leading-[16px]">就绪</span>
      <button aria-label="宏录制" className="ml-[19px] text-[#555]">
        <Icon w={12} h={12}>
          <circle cx="2.500" cy="2.500" r="2.500" fill="currentColor" stroke="none" />
          <path d="M6 1.500h6M1.500 6v5.500h10V1" />
          <path d="M6 2.500h5.500M3.500 5.500h7M3.500 7.500h7M3.500 9.500h7" strokeDasharray="1.500 1" />
        </Icon>
      </button>
      <div className="ml-auto flex h-full text-[#666]">
        <button aria-label="普通视图" className="flex w-[35px] items-center justify-center bg-[#c6c6c6]">
          <Icon w={12} h={12}><path d="M.5.500h11v11H.5zM4.500.500v11M8.500.500v11M.5 4.500h11M.5 8.500h11" /></Icon>
        </button>
        <button aria-label="页面布局视图" className="flex w-[37px] items-center justify-center">
          <Icon w={13} h={12}><path d="M.5.500h12v11H.5zM3.500 2.500h6v9h-6zM5 4.500h3M5 6.500h3M5 8.500h3" /></Icon>
        </button>
        <button aria-label="分页预览" className="flex w-[36px] items-center justify-center">
          <Icon w={13} h={12}><path d="M.5.500h12v11H.5zM4.500.500v6M8.500.500v6h-8" /></Icon>
        </button>
      </div>
      <button aria-label="缩小" className="ml-[2px] text-[#444]"><Icon w={7} h={7}><path d="M.5 3.500h6" strokeWidth="1.800" /></Icon></button>
      <div className="relative mx-[3px] flex h-[12px] w-[94px] items-center">
        <span className="absolute left-[46px] h-[5px] w-px bg-[#aaa]" />
        <input
          type="range"
          aria-label="显示比例"
          min="0"
          max="100"
          defaultValue="60"
          className="relative h-px w-full appearance-none bg-[#aaa] [&::-webkit-slider-thumb]:h-[11px] [&::-webkit-slider-thumb]:w-[5px] [&::-webkit-slider-thumb]:appearance-none [&::-webkit-slider-thumb]:bg-[#666]"
        />
      </div>
      <button aria-label="放大" className="text-[#444]"><Icon w={7} h={7}><path d="M.5 3.500h6M3.500.500v6" strokeWidth="1.800" /></Icon></button>
      <span className="mr-[6px] ml-[10px] pb-[2px] text-[12px]">160%</span>
    </footer>
  );
}

export default function App() {
  return (
    <div className="flex h-screen flex-col overflow-hidden font-['Noto_Sans_CJK_SC',sans-serif]">
      <TitleBar />
      <Ribbon />
      <FormulaBar />
      <Sheet />
      <SheetTabs />
      <StatusBar />
    </div>
  );
}
